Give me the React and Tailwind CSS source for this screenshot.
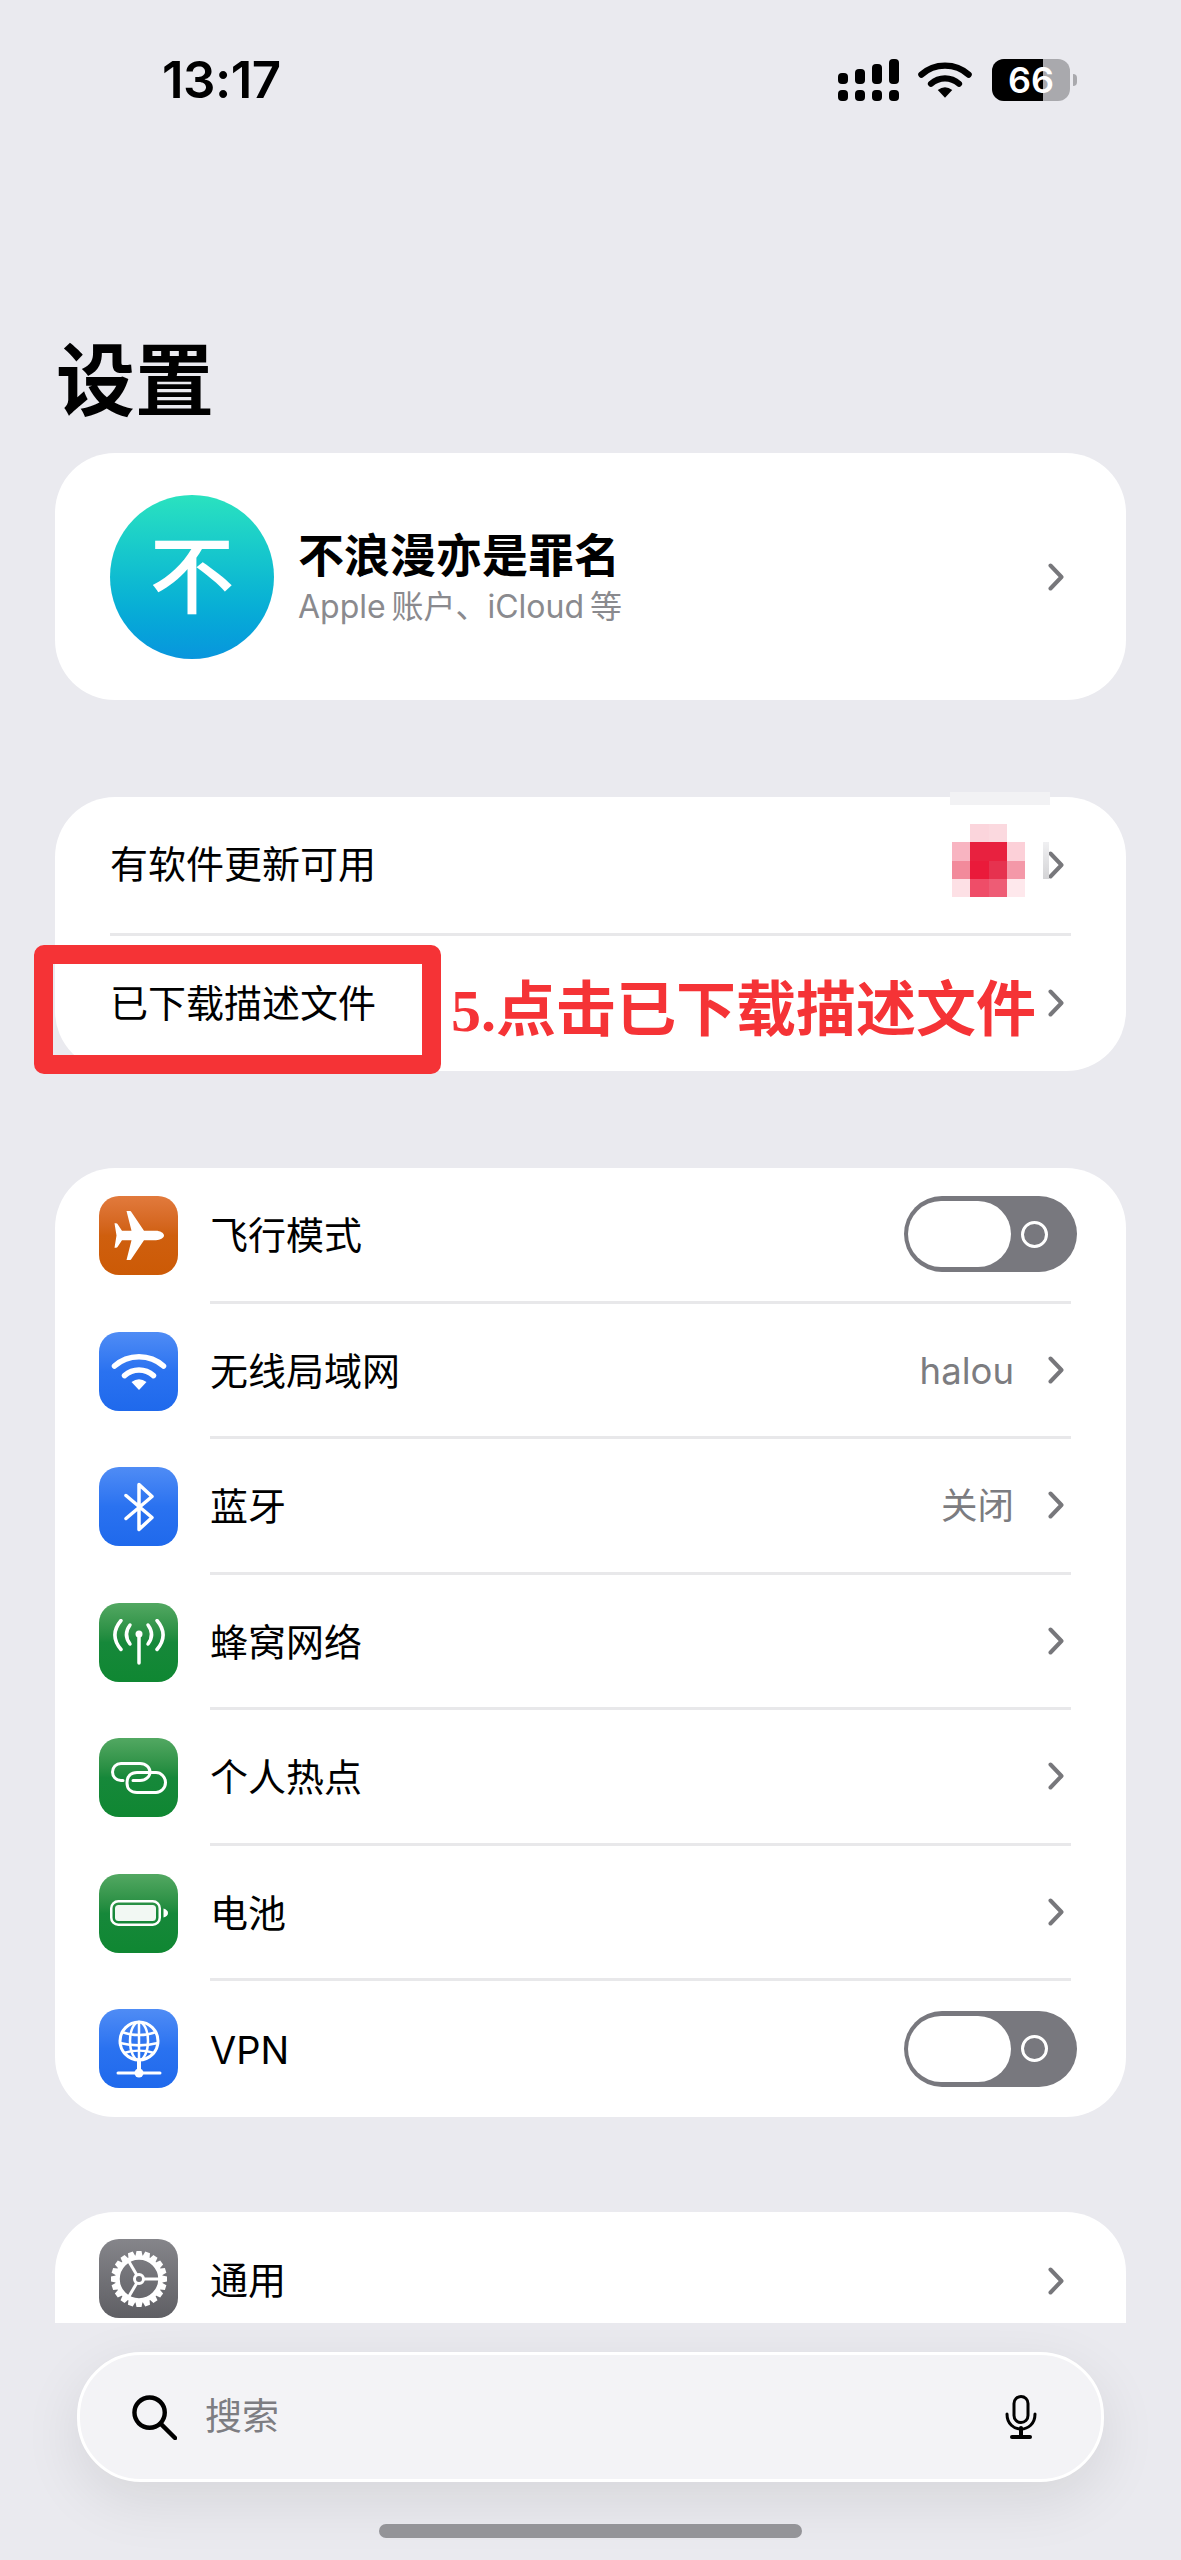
const FONT = "font-['Inter','Noto_Sans_CJK_SC',sans-serif]";

function Chevron() {
  return (
    <svg width="16" height="28" viewBox="0 0 16 28" fill="none" className="shrink-0">
      <path d="M2.5 2.5 L13.5 14 L2.5 25.5" stroke="#77777b" strokeWidth="4" strokeLinecap="round" strokeLinejoin="round" />
    </svg>
  );
}

function Toggle() {
  return (
    <div className="w-[173px] h-[76px] rounded-full bg-[#78787e] flex items-center pl-[4px] -mr-[13px]">
      <div className="w-[103px] h-[66px] rounded-full bg-white" />
      <div className="ml-[10px] w-[27px] h-[27px] rounded-full border-[3px] border-white" />
    </div>
  );
}

function PlaneIcon() {
  return (
    <svg width="50" height="50" viewBox="0 0 50 50">
      <path
        fill="#fff"
        d="M50 24.5C50 22 46 19.8 42 19.8H30L17 .5C16.7 0 16 0 15.5 0H12.5L17.5 19.8H8L3.500 13C3.200 12.500 2.800 12.300 2 12.300H.5L2.500 24.500L.5 36.700H2C2.800 36.700 3.200 36.500 3.500 36L8 29.200H17.500L12.500 49H15.500C16 49 16.700 49 17 48.500L30 29.200H42C46 29.200 50 27 50 24.500Z"
      />
    </svg>
  );
}

function WifiGlyph({ color = "#fff", width = 56, stroke = 5.5 }) {
  return (
    <svg width={width} height={width * 0.7} viewBox="0 0 56 39" fill="none">
      <path d="M3.500 14 C17 1.500 39 1.500 52.500 14" stroke={color} strokeWidth={stroke} strokeLinecap="round" />
      <path d="M13.500 23.500 C22 16 34 16 42.500 23.500" stroke={color} strokeWidth={stroke} strokeLinecap="round" />
      <path d="M20.500 30 Q28 24.500 35.500 30 L28 38 Z" fill={color} />
    </svg>
  );
}

function BluetoothIcon() {
  return (
    <svg width="32" height="50" viewBox="0 0 32 50" fill="none" stroke="#fff" strokeWidth="3.500" strokeLinecap="round" strokeLinejoin="round">
      <path d="M3 13.500 L29 35.500 L16 47.500 V2.500 L29 14.500 L3 36.500" />
    </svg>
  );
}

function AntennaIcon() {
  return (
    <svg width="52" height="46" viewBox="0 0 52 46" fill="none" stroke="#fff" strokeWidth="3.500" strokeLinecap="round">
      <circle cx="26" cy="15" r="3.500" fill="#fff" stroke="none" />
      <path d="M26 16 V44" />
      <path d="M17 6 C12.500 12 12.500 19 17 25" />
      <path d="M35 6 C39.500 12 39.500 19 35 25" />
      <path d="M8 1.500 C0 11 0 21 8 30.500" />
      <path d="M44 1.500 C52 11 52 21 44 30.500" />
    </svg>
  );
}

function LinkIcon() {
  return (
    <svg width="56" height="32" viewBox="0 0 56 32" fill="none" stroke="#fff" strokeWidth="3" strokeLinecap="round">
      <path d="M12 18.500 H10 C5 18.500 1.500 14.500 1.500 10 C1.500 5.500 5 1.500 10 1.500 H29 C35 1.500 39 5.500 39 10 C39 14.500 35 18.500 29 18.500 H22" />
      <path d="M16 21 C16 14 20 10.500 26 10.500 H45 C50 10.500 54.500 15 54.500 20.500 C54.500 26 50 30.500 45 30.500 H26 C20 30.500 16 27 16 21 Z" />
    </svg>
  );
}

function BatteryIcon() {
  return (
    <svg width="58" height="26" viewBox="0 0 58 26" fill="none">
      <rect x="1.250" y="1.250" width="48.500" height="23.500" rx="7" stroke="#fff" strokeWidth="2.500" />
      <rect x="5" y="5" width="41" height="16" rx="3.500" fill="#f2f8f3" />
      <path d="M53.500 8.500 C56.500 9.500 58 11 58 13 C58 15 56.500 16.500 53.500 17.500 Z" fill="#fff" />
    </svg>
  );
}

function GlobeIcon() {
  return (
    <svg width="46" height="58" viewBox="0 0 46 58" fill="none" stroke="#fff" strokeLinecap="round">
      <circle cx="23" cy="21" r="19" strokeWidth="3" />
      <ellipse cx="23" cy="21" rx="9" ry="19" strokeWidth="2.500" />
      <path d="M23 2 V40" strokeWidth="2.500" />
      <path d="M6 12 C16 16 30 16 40 12" strokeWidth="2.500" />
      <path d="M4 23 C16 26 30 26 42 23" strokeWidth="2.500" />
      <path d="M8 33 C17 30 29 30 38 33" strokeWidth="2.500" />
      <path d="M23 41 V50" strokeWidth="4" />
      <path d="M2 53 H44" strokeWidth="3" />
      <circle cx="23" cy="53" r="4.500" fill="#fff" stroke="none" />
    </svg>
  );
}

function GearIcon() {
  const teeth = Array.from({ length: 20 }, (_, i) => i * 18);
  return (
    <svg width="58" height="58" viewBox="0 0 58 58" fill="none" stroke="#fff">
      {teeth.map((a) => (
        <path key={a} d="M26.500 1 H31.500 L33 8 H25 Z" fill="#fff" stroke="none" transform={`rotate(${a} 29 29)`} />
      ))}
      <circle cx="29" cy="29" r="21.500" strokeWidth="4.500" />
      <circle cx="29" cy="29" r="4.500" strokeWidth="3" />
      <path d="M33.500 29 H50" strokeWidth="3" />
      <path d="M26.800 25 L18 10" strokeWidth="3" />
      <path d="M26.800 33 L18 48" strokeWidth="3" />
    </svg>
  );
}

function AppIcon({ gradient, children }) {
  return (
    <div className={`w-[79px] h-[79px] rounded-[20px] shrink-0 flex items-center justify-center ${gradient}`}>
      {children}
    </div>
  );
}

const BLUE = "bg-gradient-to-b from-[#4f8cf5] via-[#2a72f0] to-[#1f69ec]";
const GREEN = "bg-gradient-to-b from-[#52a862] via-[#16883a] to-[#0f8732]";

function Row({ icon, label, right, last }) {
  return (
    <div className="h-[135.5px] flex items-center pl-[44px]">
      {icon}
      <div className={`ml-[32px] mr-[55px] flex-1 h-full flex items-center justify-between pr-[7px] ${last ? "" : "border-b-[3px] border-[#e8e8ea]"}`}>
        <span className="text-[38px] text-black pt-[3px]">{label}</span>
        {right}
      </div>
    </div>
  );
}

function Value({ text }) {
  return (
    <div className="flex items-center gap-[34px]">
      <span className="text-[36.5px] text-[#7c7c80] pt-[3px]">{text}</span>
      <Chevron />
    </div>
  );
}

const PIXELS = [
  ["bg-transparent", "bg-[#fbd5dc]", "bg-[#fbd9df]", "bg-transparent"],
  ["bg-[#f8b4c1]", "bg-[#e8213f]", "bg-[#e8213f]", "bg-[#fcd0d8]"],
  ["bg-[#f28a9b]", "bg-[#ea1a3a]", "bg-[#e6324f]", "bg-[#f498a8]"],
  ["bg-[#fde0e5]", "bg-[#ef4d68]", "bg-[#ee5c75]", "bg-[#fee8ec]"],
];

export default function App() {
  return (
    <div className={`relative w-[1181px] h-[2560px] overflow-hidden bg-[#eaeaef] ${FONT}`}>
      {/* STATUS BAR */}
      <div className="h-[160px] flex items-center justify-between pl-[162px] pr-[104px]">
        <span className="text-[51px] font-semibold text-black tracking-[-0.5px]">13:17</span>
        <div className="flex items-center">
          <div className="grid grid-cols-4 gap-x-[7px] items-end">
            <div className="w-[10px] h-[11px] rounded-[4px] bg-black" />
            <div className="w-[10px] h-[15px] rounded-[4px] bg-black" />
            <div className="w-[10px] h-[20px] rounded-[4px] bg-black" />
            <div className="w-[10px] h-[25px] rounded-[4px] bg-black" />
            <div className="w-[10px] h-[11px] rounded-[4px] bg-black mt-[6px]" />
            <div className="w-[10px] h-[11px] rounded-[4px] bg-black mt-[6px]" />
            <div className="w-[10px] h-[11px] rounded-[4px] bg-black mt-[6px]" />
            <div className="w-[10px] h-[11px] rounded-[4px] bg-black mt-[6px]" />
          </div>
          <div className="ml-[19px] flex">
            <WifiGlyph color="#000" width={54} stroke={6.5} />
          </div>
          <div className="ml-[20px] relative w-[78px] h-[42px] rounded-[12px] overflow-hidden bg-[#a9a9ad] flex">
            <div className="w-[51px] h-full bg-black" />
            <span className="absolute inset-0 flex items-center justify-center text-[36px] font-semibold text-white leading-none">66</span>
          </div>
          <div className="ml-[3px] w-[4px] h-[12px] rounded-r-full bg-[#a9a9ad]" />
        </div>
      </div>

      {/* TITLE */}
      <h1 className="mt-[171px] pl-[56px] h-[100px] flex items-center text-[79px] font-bold text-black">设置</h1>

      <div className="mt-[22px] mx-[55px] flex flex-col gap-[97px]">
        {/* ACCOUNT */}
        <div className="h-[247px] bg-white rounded-[60px] flex items-center pl-[55px] pr-[62px]">
          <div className="w-[164px] h-[164px] rounded-full bg-gradient-to-b from-[#2ae2bf] to-[#0995dd] flex items-center justify-center text-white text-[85px] font-medium leading-none">
            不
          </div>
          <div className="ml-[24px] flex-1">
            <div className="text-[46px] font-bold text-black leading-[60px]">不浪漫亦是罪名</div>
            <div className="text-[32px] text-[#8a8a8e] leading-[44px]">Apple{"\u2009"}账户、iCloud{"\u2009"}等</div>
          </div>
          <Chevron />
        </div>

        {/* UPDATE */}
        <div className="relative h-[274px] bg-white rounded-[60px] flex flex-col px-[55px]">
          <div className="h-[138.5px] flex items-center justify-between pr-[7px] border-b-[3px] border-[#e8e8ea]">
            <span className="text-[38px] text-black">有软件更新可用</span>
            <Chevron />
          </div>
          <div className="h-[135.5px] flex items-center justify-between pr-[7px]">
            <span className="text-[38px] text-black">已下载描述文件</span>
            <span className="ml-auto mr-[12px] pt-[16px] font-['Liberation_Serif','Noto_Sans_CJK_SC',serif] text-[60px] font-bold text-[#f53336] leading-none whitespace-nowrap">
              5.点击已下载描述文件
            </span>
            <Chevron />
          </div>

          {/* blurred-out badge */}
          <div className="absolute left-[895px] -top-[5px] w-[100px] h-[13px] bg-[#f2f2f4]" />
          <div className="absolute left-[897px] top-[27px] grid grid-cols-4">
            {PIXELS.flat().map((c, i) => (
              <div key={i} className={`w-[18.3px] h-[18.3px] ${c}`} />
            ))}
          </div>
          <div className="absolute left-[988px] top-[45px] w-[6px] h-[37px] bg-gradient-to-b from-[#f0f0f2] to-[#d4d4d6]" />

          {/* annotation box */}
          <div className="absolute -left-[21px] top-[148px] w-[407px] h-[129px] border-[19px] border-[#f53336] rounded-[10px]" />
        </div>

        {/* CONNECTIVITY */}
        <div className="bg-white rounded-[60px] overflow-hidden">
          <Row
            icon={<AppIcon gradient="bg-gradient-to-b from-[#e27a3c] via-[#cf5f0e] to-[#cc5a06]"><PlaneIcon /></AppIcon>}
            label="飞行模式"
            right={<Toggle />}
          />
          <Row icon={<AppIcon gradient={BLUE}><WifiGlyph /></AppIcon>} label="无线局域网" right={<Value text="halou" />} />
          <Row icon={<AppIcon gradient={BLUE}><BluetoothIcon /></AppIcon>} label="蓝牙" right={<Value text="关闭" />} />
          <Row icon={<AppIcon gradient={GREEN}><AntennaIcon /></AppIcon>} label="蜂窝网络" right={<Chevron />} />
          <Row icon={<AppIcon gradient={GREEN}><LinkIcon /></AppIcon>} label="个人热点" right={<Chevron />} />
          <Row icon={<AppIcon gradient={GREEN}><BatteryIcon /></AppIcon>} label="电池" right={<Chevron />} />
          <Row icon={<AppIcon gradient={BLUE}><GlobeIcon /></AppIcon>} label="VPN" right={<Toggle />} last />
        </div>

        {/* GENERAL, cut off by the search area */}
        <div className="-mt-[1.5px] h-[111px] bg-white rounded-t-[60px] overflow-hidden flex pl-[44px] pt-[27px]">
          <AppIcon gradient="bg-gradient-to-b from-[#85858a] to-[#5f5f64]"><GearIcon /></AppIcon>
          <div className="ml-[32px] mr-[62px] flex-1 h-[79px] mt-[2px] flex items-center justify-between">
            <span className="text-[38px] text-black">通用</span>
            <Chevron />
          </div>
        </div>
      </div>

      {/* SEARCH */}
      <div className="mt-[29px] mx-[77px] h-[130px] rounded-[64px] bg-[#f3f3f6] border-[3px] border-white shadow-[0_18px_60px_rgba(0,0,0,0.09)] flex items-center pl-[52px] pr-[64px]">
        <svg width="45" height="45" viewBox="0 0 46 46" fill="none" stroke="#000" strokeWidth="4.500" strokeLinecap="round">
          <circle cx="18" cy="18" r="15.500" />
          <path d="M29.500 29.500 L44 44" />
        </svg>
        <span className="ml-[28px] flex-1 text-[37px] text-[#7d7d82]">搜索</span>
        <svg width="32" height="44" viewBox="0 0 32 44" fill="none" stroke="#000" strokeWidth="3" strokeLinecap="round">
          <rect x="9" y="1.500" width="14" height="26" rx="7" />
          <path d="M2 19 C2 39 30 39 30 19" />
          <path d="M16 33 V41" strokeWidth="4" />
          <path d="M7 42 H25" strokeWidth="4" />
        </svg>
      </div>

      {/* HOME INDICATOR */}
      <div className="mt-[42px] mx-auto w-[423px] h-[14px] rounded-full bg-[#949498]" />
    </div>
  );
}
